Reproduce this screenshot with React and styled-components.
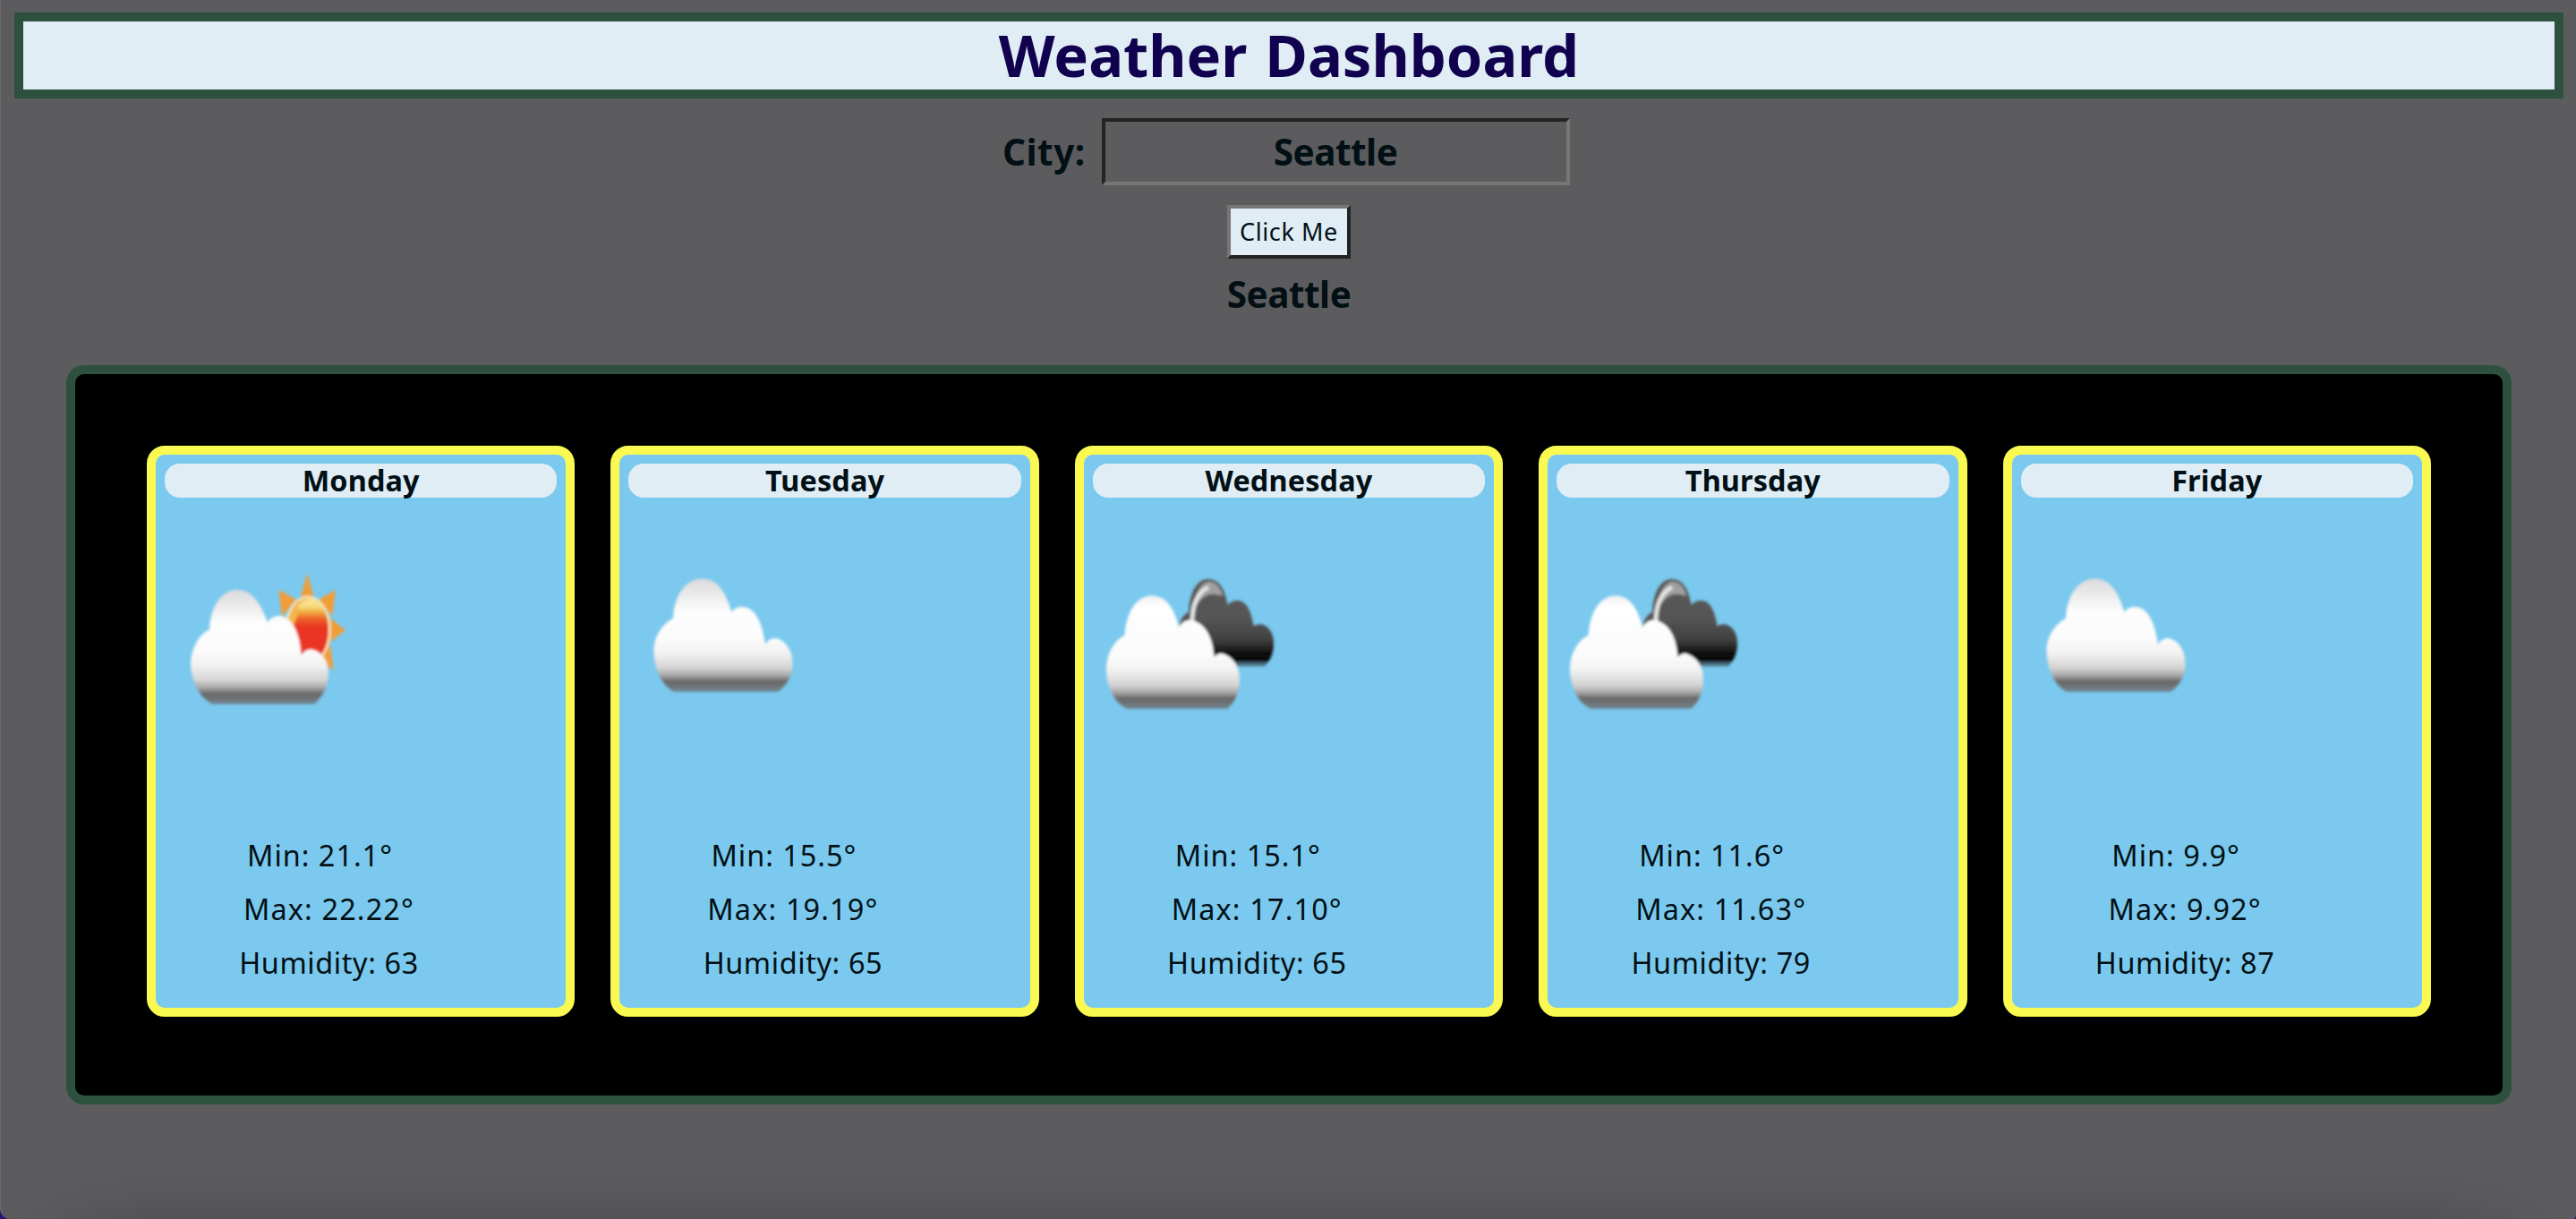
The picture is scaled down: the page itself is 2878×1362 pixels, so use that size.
import React from "react";
import styled, { createGlobalStyle } from "styled-components";

const GlobalStyle = createGlobalStyle`
  html { background: #2a1270; }
  body {
    margin: 0;
    color: #021015;
    font-family: "Lucida Grande", "Noto Sans", "Open Sans", sans-serif;
  }
`;

const Page = styled.div`
  box-sizing: border-box;
  display: flex;
  flex-direction: column;
  align-items: center;
  width: 100vw;
  height: 100vh;
  overflow: hidden;
  padding: 14px 14px 0 15px;
  border-left: 1px solid #6b6b6d;
  border-radius: 0 0 3px 12px / 0 0 6px 12px;
  background:
    linear-gradient(90deg, #5c5c5e, rgba(92, 92, 94, 0) 160px, rgba(92, 92, 94, 0) calc(100% - 160px), #5c5c5e),
    linear-gradient(0deg, #535355, #58585a 24px, #5c5c5e 62px);
`;

const Title = styled.h1`
  box-sizing: border-box;
  align-self: stretch;
  height: 96px;
  margin: 0;
  padding-bottom: 2px;
  border: 10px solid #2d513e;
  background: #e0edf5;
  color: #11024f;
  font-size: 65px;
  line-height: 74px;
  word-spacing: 3px;
  text-align: center;
`;

const SearchForm = styled.form`
  display: flex;
  flex-direction: column;
  align-items: center;
  gap: 22px;
  margin-top: 22px;
`;

const Field = styled.label`
  display: flex;
  align-items: center;
  padding-right: 6px;
  font-size: 40.5px;
  font-weight: bold;
`;

const FieldName = styled.span`
  width: 111px;
  letter-spacing: 0.5px;
`;

const CityInput = styled.input`
  box-sizing: border-box;
  width: 523px;
  height: 75px;
  padding: 0 5px 0 4px;
  border: 4px solid;
  border-color: #222323 #767676 #767676 #222323;
  border-radius: 0;
  outline: none;
  background: transparent;
  color: inherit;
  font: inherit;
  letter-spacing: -0.5px;
  text-align: center;
`;

const SubmitButton = styled.button`
  box-sizing: border-box;
  width: 138px;
  height: 60px;
  padding: 0 0 1px;
  border: 4px solid;
  border-color: #767676 #222323 #222323 #767676;
  border-radius: 0;
  background: #e0edf5;
  color: inherit;
  font-family: inherit;
  font-size: 27px;
  letter-spacing: 0.6px;
`;

const CityName = styled.h2`
  margin: 15px 0 54px;
  font-size: 40.5px;
  line-height: 50px;
  letter-spacing: -0.5px;
`;

const Forecast = styled.main`
  box-sizing: border-box;
  display: grid;
  grid-template-columns: repeat(5, 1fr);
  gap: 40px;
  width: 2732px;
  height: 826px;
  padding: 80px 80px 88px;
  border: 10px solid #2d513e;
  border-radius: 20px;
  background: #000;
`;

const Card = styled.article`
  display: flex;
  flex-direction: column;
  padding: 10px;
  border: 10px solid #faf951;
  border-radius: 20px;
  background: #7bc9ee;
`;

const DayName = styled.h3`
  box-sizing: border-box;
  height: 38px;
  margin: 0;
  padding-bottom: 2px;
  border-radius: 17px;
  background: #e0edf5;
  font-size: 32.4px;
  line-height: 36px;
  letter-spacing: 0.15px;
  text-align: center;
`;

const WeatherIcon = styled.svg`
  display: block;
  width: 220px;
  height: 220px;
  margin: 44px 0 105px;
`;

const Stats = styled.div`
  display: flex;
  flex-direction: column;
  align-items: center;
  width: 367px;
`;

const Stat = styled.p`
  margin: 0;
  padding-right: ${(p) => p.$inset || 0}px;
  font-size: 32.4px;
  line-height: 60px;
  letter-spacing: ${(p) => p.$tracking}px;
  white-space: nowrap;
`;

const ORDINARY_CLOUD =
  "M28.5 128C28 112 38 97 50 91C51 64 65 46.5 82.6 46.5C99 46.5 109 61 115.3 84C118 79.5 123 77.5 128.5 78C142 79 150 97 153 120C156 115 160 113 164 113C176 115 183.6 127 183.6 142C183.6 156 177 165 167.5 173H51C36 165 29 146 28.5 128Z";
const SUN_CLOUD =
  "M29 142C29 125 39 108 50 103.5C51.5 76 64.5 59 81.3 59C97 59 107 74 115 95C119 90 123 87.5 129 88C143 90 151 108 152.5 132C156 127 160 125 164 125.5C176 128 183 138 183 154C182 169 176 178 167.5 186.7H52.8C38 179 29.5 159 29 142Z";
const FRONT_CLOUD =
  "M15 148C15 131 24 115 35.5 110C37.5 83 49 65.5 66 65.5C82 65.5 91 80 96 100.5C100 95 105 92 111 93C126 97 134 112 135.5 134C138 131 141 130 144 130C156 133 164 144 164 159C164 173 159 184 150.5 192H38C23 185 15 165 15 148Z";
const BACK_CLOUD =
  "M96 102C97 93 101 87 107 84C108 62 116 47 129 47C141 47 148 59 150.5 76C154 72 158 70.5 162.5 71C172 72 177 83 179.5 99.5C182 98 186 97 190 98C198 101 202 109 202 119C202 130 198 138 192 144.5H140Z";

function Cloud({ id, d, top, bottom, lit }) {
  return (
    <>
      <defs>
        <linearGradient id={id} gradientUnits="userSpaceOnUse" x1="0" x2="0" y1={top} y2={bottom}>
          <stop offset="0" stopColor={lit ? "#efefef" : "#d9d9db"} />
          <stop offset="0.12" stopColor={lit ? "#ffffff" : "#e7e7e8"} />
          <stop offset="0.3" stopColor="#fdfdfd" />
          <stop offset="0.52" stopColor="#fcfcfc" />
          <stop offset="0.66" stopColor="#f2f2f2" />
          <stop offset="0.79" stopColor="#d4d4d4" />
          <stop offset="0.85" stopColor="#adadad" />
          <stop offset="0.91" stopColor="#686868" />
          <stop offset="0.95" stopColor="#6f7274" />
          <stop offset="1" stopColor="#708a98" />
        </linearGradient>
      </defs>
      <path d={d} fill={`url(#${id})`} />
    </>
  );
}

function SoftEdge({ id }) {
  return (
    <filter id={id} x="-5%" y="-5%" width="110%" height="110%">
      <feGaussianBlur stdDeviation="1.8" />
    </filter>
  );
}

function SunnyCloud({ id }) {
  return (
    <WeatherIcon viewBox="0 0 220 220">
      <defs>
        <SoftEdge id={id + "-soft"} />
        <linearGradient id={id + "-sun"} gradientUnits="userSpaceOnUse" x1="0" x2="0" y1="67" y2="140">
          <stop offset="0" stopColor="#fae596" />
          <stop offset="0.14" stopColor="#f8dd80" />
          <stop offset="0.22" stopColor="#f2b447" />
          <stop offset="0.32" stopColor="#ec6b2a" />
          <stop offset="0.46" stopColor="#e93423" />
          <stop offset="1" stopColor="#e93423" />
        </linearGradient>
      </defs>
      <g filter={`url(#${id}-soft)`}>
        <path
          fill="#f19d38"
          d="M159.3 40L152 67H166.5ZM127.5 59L131 89L147 70ZM191 59L172 70L187 89ZM202 104L184 90V118ZM188.5 149L173 138L185 119Z"
        />
        <ellipse cx="160" cy="104" rx="24.5" ry="37" fill="#f3a83e" stroke="#f5e9bd" strokeWidth="2.5" />
        <ellipse cx="162" cy="104" rx="21" ry="35" fill={`url(#${id}-sun)`} />
        <path d="M139 92C142 79 147 76 150 83L144 99Z" fill="#f3b548" />
        <Cloud id={id + "-cloud"} d={SUN_CLOUD} top={57} bottom={187} />
      </g>
    </WeatherIcon>
  );
}

function SingleCloud({ id }) {
  return (
    <WeatherIcon viewBox="0 0 220 220">
      <defs>
        <SoftEdge id={id + "-soft"} />
      </defs>
      <g filter={`url(#${id}-soft)`}>
        <Cloud id={id + "-cloud"} d={ORDINARY_CLOUD} top={45} bottom={173} />
      </g>
    </WeatherIcon>
  );
}

function BrokenClouds({ id }) {
  return (
    <WeatherIcon viewBox="0 0 220 220">
      <defs>
        <SoftEdge id={id + "-soft"} />
        <linearGradient id={id + "-dark"} gradientUnits="userSpaceOnUse" x1="0" x2="0" y1="46" y2="145">
          <stop offset="0" stopColor="#5a5a5a" />
          <stop offset="0.45" stopColor="#555555" />
          <stop offset="0.7" stopColor="#3f3f3f" />
          <stop offset="0.83" stopColor="#141414" />
          <stop offset="0.93" stopColor="#000000" />
          <stop offset="0.95" stopColor="#3f5c6b" />
          <stop offset="1" stopColor="#557f94" />
        </linearGradient>
      </defs>
      <g filter={`url(#${id}-soft)`}>
        <path d={BACK_CLOUD} fill={`url(#${id}-dark)`} />
        <path d="M114 70C118 54 126 49 131 50C138 51 143 57 145 66C134 62 125 62 116 76Z" fill="#a0a0a0" />
        <path d="M111 95C111 76 117 62 129 56" fill="none" stroke="#e6e6e6" strokeWidth="4.5" />
        <Cloud id={id + "-cloud"} d={FRONT_CLOUD} top={64} bottom={192} lit />
      </g>
    </WeatherIcon>
  );
}

const ICONS = { sunny: SunnyCloud, cloud: SingleCloud, broken: BrokenClouds };

const DAYS = [
  { day: "Monday", icon: "sunny", min: "21.1", max: "22.22", humidity: 63 },
  { day: "Tuesday", icon: "cloud", min: "15.5", max: "19.19", humidity: 65 },
  { day: "Wednesday", icon: "broken", min: "15.1", max: "17.10", humidity: 65 },
  { day: "Thursday", icon: "broken", min: "11.6", max: "11.63", humidity: 79 },
  { day: "Friday", icon: "cloud", min: "9.9", max: "9.92", humidity: 87 },
];

function DayCard({ day, icon, min, max, humidity }) {
  const Icon = ICONS[icon];
  return (
    <Card>
      <DayName>{day}</DayName>
      <Icon id={day.toLowerCase()} />
      <Stats>
        <Stat $inset={20} $tracking={1}>Min: {min}°</Stat>
        <Stat $tracking={1.15}>Max: {max}°</Stat>
        <Stat $tracking={0.6}>Humidity: {humidity}</Stat>
      </Stats>
    </Card>
  );
}

export default function App() {
  return (
    <>
      <GlobalStyle />
      <Page>
        <Title>Weather Dashboard</Title>
        <SearchForm onSubmit={(e) => e.preventDefault()}>
          <Field>
            <FieldName>City:</FieldName>
            <CityInput defaultValue="Seattle" />
          </Field>
          <SubmitButton>Click Me</SubmitButton>
        </SearchForm>
        <CityName>Seattle</CityName>
        <Forecast>
          {DAYS.map((d) => (
            <DayCard key={d.day} {...d} />
          ))}
        </Forecast>
      </Page>
    </>
  );
}
